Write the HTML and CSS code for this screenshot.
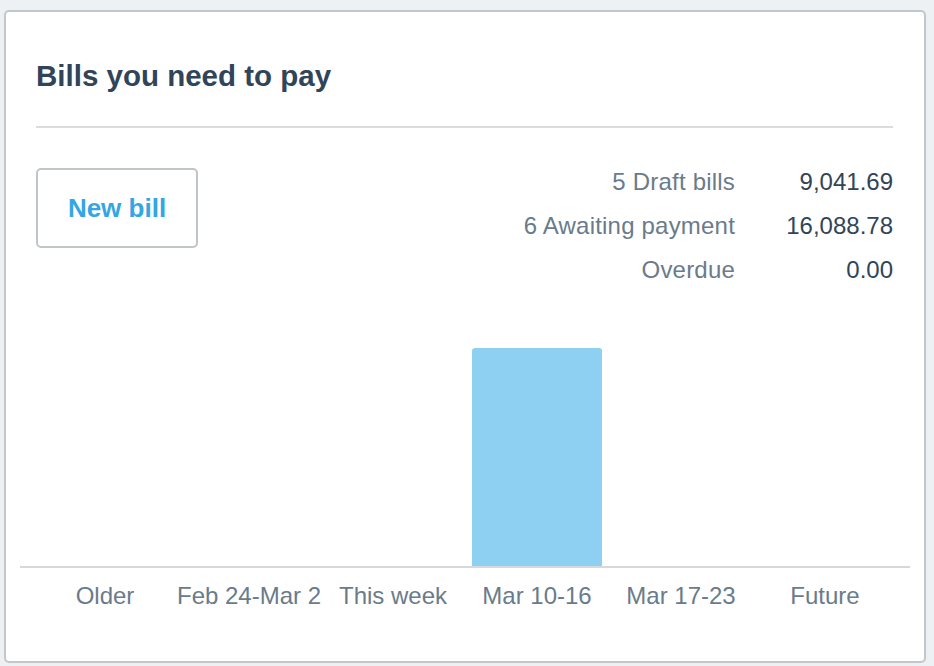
FILE: index.html
```html
<!DOCTYPE html>
<html lang="en">
  <head>
    <meta charset="UTF-8" />
    <meta name="viewport" content="width=device-width, initial-scale=1.0" />
    <title>Bills you need to pay</title>
    <link rel="stylesheet" href="styles.css">
  </head>
  <body>
    <div class="bills-card">
      <div class="bills-header">
        <h2>Bills you need to pay</h2>
      </div>

      <div class="bills-summary">
        <button class="new-bill" type="button">New bill</button>
        <div class="bills-stats">
          <span class="stat-label">5 Draft bills</span>
          <span class="stat-value">9,041.69</span>
          <span class="stat-label">6 Awaiting payment</span>
          <span class="stat-value">16,088.78</span>
          <span class="stat-label">Overdue</span>
          <span class="stat-value">0.00</span>
        </div>
      </div>

      <div class="bills-chart">
        <div class="chart-bars">
          <div class="chart-col"></div>
          <div class="chart-col"></div>
          <div class="chart-col"></div>
          <div class="chart-col"><div class="chart-bar" style="height: 218px"></div></div>
          <div class="chart-col"></div>
          <div class="chart-col"></div>
        </div>
        <div class="chart-labels">
          <span>Older</span>
          <span>Feb 24-Mar 2</span>
          <span>This week</span>
          <span>Mar 10-16</span>
          <span>Mar 17-23</span>
          <span>Future</span>
        </div>
      </div>
    </div>
  </body>
</html>
```

FILE: styles.css
```css
* {
  padding: 0;
  margin: 0;
  box-sizing: border-box;
}

body {
  font-family: "Liberation Sans", Arial, sans-serif;
  background: #eef1f3;
  width: 934px;
  height: 666px;
  overflow: hidden;
}

.bills-card {
  margin: 10px 8px 0 4px;
  height: 653px;
  background: #fff;
  border: 2px solid #c2c7cc;
  border-radius: 5px;
  padding: 0 31px 0 30px;
}

/* Header */
.bills-header {
  padding: 47px 0 33px;
  border-bottom: 2px solid #d9dde0;
}

.bills-header h2 {
  font-size: 29.5px;
  line-height: 34px;
  font-weight: bold;
  color: #30445a;
}

/* Summary */
.bills-summary {
  display: flex;
  justify-content: space-between;
  align-items: flex-start;
  padding-top: 32px;
}

.new-bill {
  margin-top: 8px;
  width: 162px;
  height: 80px;
  background: #fff;
  border: 2px solid #c0c5ca;
  border-radius: 5px;
  color: #33a6e4;
  font-family: inherit;
  font-size: 26px;
  font-weight: bold;
  cursor: pointer;
}

.bills-stats {
  display: grid;
  grid-template-columns: auto 158px;
  grid-auto-rows: 44px;
  align-items: center;
  text-align: right;
  font-size: 24px;
}

.stat-label {
  color: #6a7b8b;
  letter-spacing: 0.2px;
}

.stat-value {
  color: #30445a;
}

/* Chart */
.bills-chart {
  margin: 0 -17px 0 -16px;
}

.chart-bars {
  display: grid;
  grid-template-columns: repeat(6, 144px);
  height: 276px;
  padding: 0 12px 0 13px;
  border-bottom: 2px solid #d5d9dc;
  align-items: end;
}

.chart-col {
  display: flex;
  justify-content: center;
  height: 100%;
  align-items: flex-end;
}

.chart-bar {
  width: 130px;
  background: #8dd0f2;
  border-radius: 3px 3px 0 0;
}

.chart-labels {
  display: grid;
  grid-template-columns: repeat(6, 144px);
  padding: 14px 12px 0 13px;
  text-align: center;
  font-size: 24px;
  line-height: 28px;
  color: #6a7b8b;
  white-space: nowrap;
}
```
